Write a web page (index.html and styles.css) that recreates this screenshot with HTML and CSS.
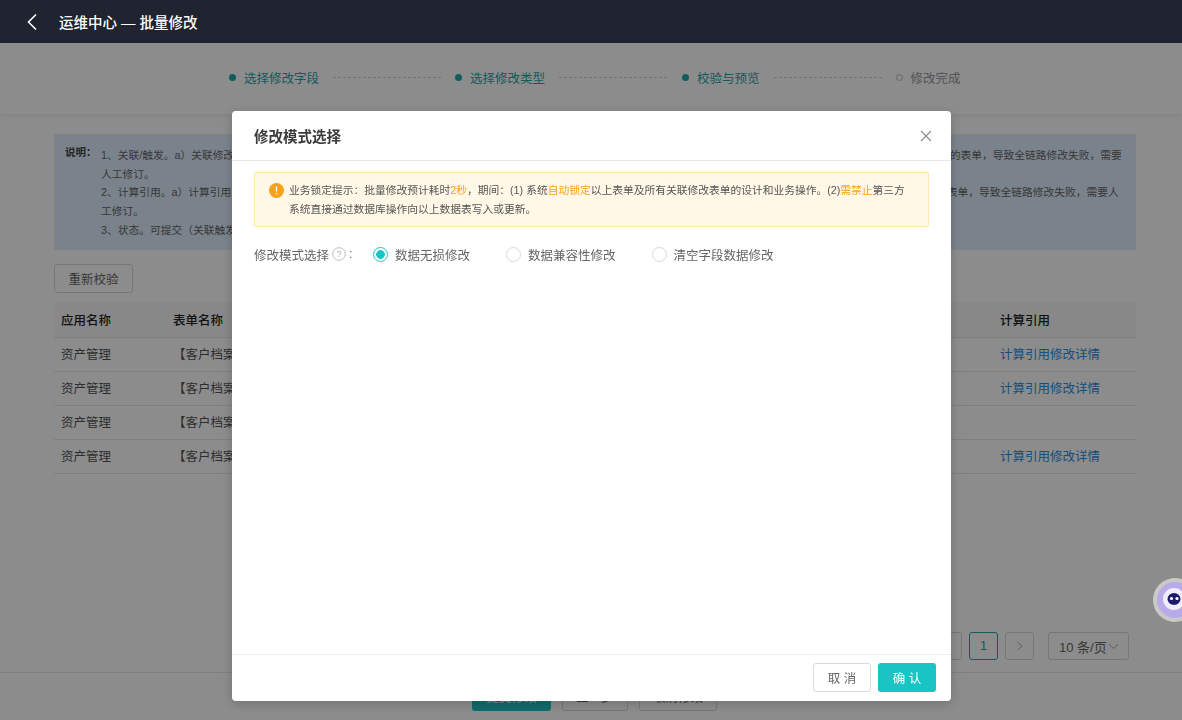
FILE: index.html
```html
<!DOCTYPE html>
<html lang="zh-CN">
<head>
  <meta charset="UTF-8"/>
  <meta name="viewport" content="width=device-width, initial-scale=1.0"/>
  <title>运维中心 — 批量修改</title>
  <link rel="stylesheet" href="styles.css">
</head>
<body>
  <div class="page">
    <header class="topbar">
      <svg class="back-icon" width="12" height="18" viewBox="0 0 12 18"><path d="M10 1.5 2.5 9l7.5 7.5" fill="none" stroke="#fff" stroke-width="1.6"/></svg>
      <span class="topbar-title">运维中心 — 批量修改</span>
    </header>

    <div class="steps">
      <span class="step"><i class="dot"></i>选择修改字段</span>
      <span class="step-line"></span>
      <span class="step"><i class="dot"></i>选择修改类型</span>
      <span class="step-line step-line-wide"></span>
      <span class="step"><i class="dot"></i>校验与预览</span>
      <span class="step-line"></span>
      <span class="step step-todo"><i class="dot"></i>修改完成</span>
    </div>

    <main class="main">
      <div class="notes">
        <div class="notes-label">说明：</div>
        <div class="notes-text">
          <p>1、关联/触发。a）关联修改字段的类型变更时，可能影响已配置关联或触发规则的下游表单。b）若下游表单未同步调整，关联规则会指向错误字段及引用该字段的后续审批流程中的表单，导致全链路修改失败，需要人工修订。</p>
          <p>2、计算引用。a）计算引用字段的类型变更时，可能影响已配置计算公式的字段取值。b）若公式未同步调整，计算结果将出现错误，并影响引用该字段的所有关联业务流程及下游表单，导致全链路修改失败，需要人工修订。</p>
          <p>3、状态。可提交（关联触发与计算引用均校验通过）。</p>
        </div>
      </div>

      <button class="btn btn-plain recheck">重新校验</button>

      <table class="grid">
        <thead>
          <tr><th class="col-app">应用名称</th><th>表单名称</th><th class="col-calc">计算引用</th></tr>
        </thead>
        <tbody>
          <tr><td>资产管理</td><td>【客户档案】</td><td><a class="link">计算引用修改详情</a></td></tr>
          <tr><td>资产管理</td><td>【客户档案】</td><td><a class="link">计算引用修改详情</a></td></tr>
          <tr><td>资产管理</td><td>【客户档案】</td><td></td></tr>
          <tr><td>资产管理</td><td>【客户档案】</td><td><a class="link">计算引用修改详情</a></td></tr>
        </tbody>
      </table>

      <div class="pager">
        <span class="pager-btn">&lt;</span>
        <span class="pager-btn pager-on">1</span>
        <span class="pager-btn pager-next">
          <svg width="8" height="10" viewBox="0 0 8 10"><path d="M1.5 1 6 5 1.5 9" fill="none" stroke="#b0b0b0" stroke-width="1"/></svg>
        </span>
        <span class="pager-size">10 条/页<svg width="11" height="7" viewBox="0 0 11 7"><path d="M1 1l4.5 4.5L10 1" fill="none" stroke="#aaa" stroke-width="1"/></svg></span>
      </div>
    </main>

    <footer class="page-foot">
      <button class="btn btn-primary foot-submit">提交修改</button>
      <button class="btn btn-plain foot-prev">上一步</button>
      <button class="btn btn-plain foot-cancel">取消修改</button>
    </footer>
  </div>

  <!-- Modal -->
  <div class="overlay">
    <div class="modal">
      <div class="modal-head">
        <span class="modal-title">修改模式选择</span>
        <svg class="modal-close" width="12" height="12" viewBox="0 0 12 12"><path d="M1 1l10 10M11 1 1 11" stroke="#8c8c8c" stroke-width="1.1" fill="none"/></svg>
      </div>
      <div class="modal-body">
        <div class="alert">
          <svg class="alert-icon" width="15" height="15" viewBox="0 0 15 15"><circle cx="7.5" cy="7.5" r="7.5" fill="#f9a11b"/><path d="M7.5 3.5v5" stroke="#fff" stroke-width="1.3"/><circle cx="7.5" cy="10.6" r=".8" fill="#fff"/></svg>
          <p>业务锁定提示：批量修改预计耗时<em>2秒</em>，期间：(1) 系统<em>自动锁定</em>以上表单及所有关联修改表单的设计和业务操作。(2)<em>需禁止</em>第三方系统直接通过数据库操作向以上数据表写入或更新。</p>
        </div>
        <div class="mode-row">
          <span class="mode-label">修改模式选择<svg class="help-icon" width="14" height="14" viewBox="0 0 14 14"><circle cx="7" cy="7" r="6.3" fill="none" stroke="#bdbdbd"/><text x="7" y="10" text-anchor="middle" class="help-mark">?</text></svg>:</span>
          <label class="radio radio-on"><i></i>数据无损修改</label>
          <label class="radio"><i></i>数据兼容性修改</label>
          <label class="radio"><i></i>清空字段数据修改</label>
        </div>
      </div>
      <div class="modal-foot">
        <button class="btn btn-plain modal-btn">取 消</button>
        <button class="btn btn-teal modal-btn">确 认</button>
      </div>
    </div>
  </div>

  <svg class="bot" width="29" height="44" viewBox="0 0 29 44">
    <circle cx="22" cy="22" r="22" fill="#c9c9c5"/>
    <circle cx="22" cy="22" r="18" fill="#b9abe9"/>
    <circle cx="21" cy="21" r="11" fill="#efeefa"/>
    <ellipse cx="21" cy="21" rx="6.5" ry="6" fill="#1d1a6e"/>
    <circle cx="18.5" cy="20.5" r="1.6" fill="#fff"/>
    <circle cx="24" cy="20.5" r="1.6" fill="#fff"/>
  </svg>
</body>
</html>
```

FILE: styles.css
```css
* { box-sizing: border-box; }
body {
  margin: 0; background-color: #fff; color: #555;
  font-family: "Liberation Sans", "Noto Sans CJK SC", sans-serif;
  font-size: 12.5px; overflow: hidden;
}
p { margin: 0; }
.page {
  display: flex; flex-direction: column; height: 720px;
}
/* Top bar sits above the modal backdrop */
.topbar {
  height: 43px; background-color: #1f2430; color: #fff;
  display: flex; align-items: center; padding-left: 26px; flex: none;
  position: relative; z-index: 15;
}
.topbar-title { margin-left: 21px; font-size: 14.5px; font-weight: 500; }
.back-icon { display: block; }
/* Steps */
.steps {
  height: 71px; flex: none; display: flex; align-items: center;
  padding: 0 0 2px 229px; background-color: #fff;
  box-shadow: 0 2px 6px rgba(0,0,0,0.08);
}
.step {
  display: flex; align-items: center; gap: 8px;
  color: #26a5a5; white-space: nowrap;
}
.step-todo { color: #999; }
.dot {
  width: 7px; height: 7px; border-radius: 50%; background-color: #1fa8a8;
}
.step-todo .dot {
  background: none; border: 1px solid #bbb;
}
.step-line {
  width: 108px; margin: 0 14px; border-top: 1px dashed #d2d2d2;
}
.step-line-wide { margin-right: 15px; }
/* Main */
.main {
  flex: 1; display: flex; flex-direction: column; align-items: flex-start;
  padding: 20px 46px 12px 54px; min-height: 0;
}
.notes {
  width: 100%; height: 116px; background-color: #dfeeff;
  padding: 12px 12px 0 11px; display: flex; font-size: 10.75px; color: #666;
}
.notes-label {
  width: 36px; flex: none; font-weight: bold; font-size: 10.5px;
  color: #444; margin-top: -3px; line-height: 18.7px;
}
.notes-text { line-height: 18.7px; }
.btn {
  font-family: inherit; font-size: 12.5px; border-radius: 3px;
  height: 28px; cursor: pointer;
}
.btn-plain { background-color: #fff; border: 1px solid #d9d9d9; color: #666; }
.btn-primary { background-color: #20c4c4; border: none; color: #fff; }
.btn-teal { background-color: #19c4c4; border: none; color: #fff; }
.recheck { width: 79px; height: 29px; margin-top: 14px; flex: none; }
/* Table */
.grid {
  width: 100%; margin-top: 10px; border-collapse: collapse; table-layout: fixed;
}
.grid th, .grid td {
  height: 34px; padding: 0 7px 2px; text-align: left;
  border-bottom: 1px solid #e8e8e8; white-space: nowrap; overflow: hidden;
}
.grid th { background-color: #f7f7f7; color: #222; font-weight: 500; padding-bottom: 0; }
.col-app { width: 112px; }
.col-calc { width: 143px; }
.link { color: #2b8fe0; }
/* Pager */
.pager {
  margin-top: auto; align-self: flex-end; display: flex; align-items: center;
  margin-right: 7px;
}
.pager-btn {
  width: 29px; height: 28px; border: 1px solid #d9d9d9; border-radius: 3px;
  display: flex; align-items: center; justify-content: center;
  margin-right: 7px; color: #bbb;
}
.pager-on { border-color: #26a5a5; color: #26a5a5; }
.pager-next { margin-right: 14px; }
.pager-size {
  width: 81px; height: 28px; border: 1px solid #d9d9d9; border-radius: 3px;
  display: flex; align-items: center; gap: 1px;
  padding: 0 0 0 10px; color: #666; font-size: 13px; white-space: nowrap;
}
/* Page footer */
.page-foot {
  height: 48px; flex: none; border-top: 1px solid #e8e8e8;
  display: flex; align-items: center; padding-left: 472px; gap: 11px;
}
.foot-submit { width: 79px; }
.foot-prev { width: 66px; }
.foot-cancel { width: 78px; }
/* Modal */
.overlay {
  position: fixed; top: 0; left: 0; width: 100%; height: 100%;
  background-color: rgba(0,0,0,0.45); z-index: 10;
  display: flex; justify-content: center; align-items: flex-start;
  padding: 111px 0 0 1px;
}
.modal {
  width: 719px; height: 590px; background-color: #fff; border-radius: 4px;
  display: flex; flex-direction: column;
  box-shadow: 0 3px 12px rgba(0,0,0,0.2);
}
.modal-head {
  height: 50px; flex: none; border-bottom: 1px solid #e8e8e8;
  display: flex; align-items: center; justify-content: space-between;
  padding: 0 19px 0 22px;
}
.modal-title { font-size: 14.5px; color: #3a3a3a; font-weight: 600; }
.modal-body { flex: 1; padding: 11px 22px; }
.alert {
  height: 55px; background-color: #fff8e6; border: 1px solid #ffe7ae;
  border-radius: 2px; padding: 8px 14px 0 14px; display: flex; gap: 5px;
  font-size: 10.76px; line-height: 19px; color: #555;
}
.alert-icon { flex: none; margin-top: 2px; }
.alert em { font-style: normal; color: #f9a11b; }
.mode-row {
  display: flex; align-items: center; margin-top: 17px; height: 20px;
  white-space: nowrap;
}
.mode-label { display: flex; align-items: center; width: 119px; color: #666; gap: 3px; }
.help-mark { font-size: 9px; fill: #b0b0b0; font-family: "Liberation Sans", sans-serif; }
.radio {
  display: flex; align-items: center; gap: 7px; margin-right: 36px; color: #666;
}
.radio i {
  width: 15px; height: 15px; border-radius: 50%; border: 1px solid #d9d9d9;
  background-color: #fff; display: block;
}
.radio-on i {
  border-color: #19c4c4;
  background: radial-gradient(circle, #19c4c4 0, #19c4c4 4px, #fff 4.6px);
}
.modal-foot {
  height: 47px; flex: none; border-top: 1px solid #eee;
  display: flex; justify-content: flex-end; gap: 7px; padding: 8px 15px 0 0;
}
.modal-btn { width: 58px; height: 29px; }
/* Floating bot */
.bot {
  position: fixed; top: 578px; right: 0; z-index: 20; display: block;
}
```
